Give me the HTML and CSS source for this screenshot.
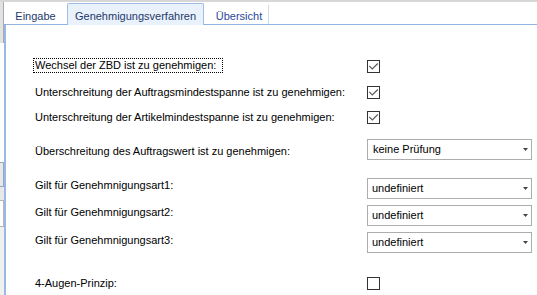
FILE: index.html
```html
<!DOCTYPE html>
<html lang="de">
<head>
<meta charset="utf-8">
<title>Genehmigungsverfahren</title>
<link rel="stylesheet" href="styles.css">
</head>
<body>
<div class="topline"></div>
<div class="window">
  <div class="side">
    <div class="side-a"></div>
    <div class="side-gap"></div>
    <div class="side-b"></div>
    <div class="side-c"></div>
    <div class="side-d"></div>
    <div class="side-e"></div>
  </div>
  <div class="tabctl">
    <div class="tabbar">
      <div class="tab tab-first">Eingabe</div>
      <div class="tab tab-active">Genehmigungsverfahren</div>
      <div class="tab tab-last">Übersicht</div>
    </div>
    <div class="page">
      <div class="row r1">
        <span class="label focus">Wechsel der ZBD ist zu genehmigen:</span>
        <span class="check"><svg class="tick" viewBox="0 0 11 11" width="11" height="11"><path d="M1.2 4.8 L4.3 7.9 L9.8 2.5" fill="none" stroke="#5a5a5a" stroke-width="1.2"/></svg></span>
      </div>
      <div class="row r2">
        <span class="label">Unterschreitung der Auftragsmindestspanne ist zu genehmigen:</span>
        <span class="check"><svg class="tick" viewBox="0 0 11 11" width="11" height="11"><path d="M1.2 4.8 L4.3 7.9 L9.8 2.5" fill="none" stroke="#5a5a5a" stroke-width="1.2"/></svg></span>
      </div>
      <div class="row r3">
        <span class="label">Unterschreitung der Artikelmindestspanne ist zu genehmigen:</span>
        <span class="check"><svg class="tick" viewBox="0 0 11 11" width="11" height="11"><path d="M1.2 4.8 L4.3 7.9 L9.8 2.5" fill="none" stroke="#5a5a5a" stroke-width="1.2"/></svg></span>
      </div>
      <div class="row r4">
        <span class="label down">Überschreitung des Auftragswert ist zu genehmigen:</span>
        <div class="select wide"><span>keine Prüfung</span><svg class="arrow" width="5" height="3" viewBox="0 0 5 3"><path d="M0 0H5L2.5 3Z" fill="#444"/></svg></div>
      </div>
      <div class="row r5">
        <span class="label lift">Gilt für Genehmnigungsart1:</span>
        <div class="select"><span>undefiniert</span><svg class="arrow" width="5" height="3" viewBox="0 0 5 3"><path d="M0 0H5L2.5 3Z" fill="#444"/></svg></div>
      </div>
      <div class="row r6">
        <span class="label lift">Gilt für Genehmnigungsart2:</span>
        <div class="select"><span>undefiniert</span><svg class="arrow" width="5" height="3" viewBox="0 0 5 3"><path d="M0 0H5L2.5 3Z" fill="#444"/></svg></div>
      </div>
      <div class="row r7">
        <span class="label lift-s">Gilt für Genehmnigungsart3:</span>
        <div class="select"><span>undefiniert</span><svg class="arrow" width="5" height="3" viewBox="0 0 5 3"><path d="M0 0H5L2.5 3Z" fill="#444"/></svg></div>
      </div>
      <div class="row r8">
        <span class="label">4-Augen-Prinzip:</span>
        <span class="check"></span>
      </div>
    </div>
  </div>
</div>
</body>
</html>
```

FILE: styles.css
```css
html, body {
  margin: 0;
  padding: 0;
  height: 295px;
  overflow: hidden;
  background: #ffffff;
  font-family: "Liberation Sans", Arial, sans-serif;
}

.topline {
  height: 2px;
  background: #d7d7d7;
}

.window {
  display: flex;
  height: 293px;
}

/* partially visible panel on the left */
.side {
  width: 4px;
  display: flex;
  flex-direction: column;
}
.side-a {
  height: 41px;
  background: #e2e2e2;
  border-right: 1px solid #a9a9a9;
  box-sizing: border-box;
}
.side-gap {
  height: 119px;
}
.side-b {
  height: 25px;
  box-sizing: border-box;
  background: #e8e8e8;
  border-top: 1px solid #8ea8c8;
  border-bottom: 1px solid #8ea8c8;
  border-right: 1px solid #8ea8c8;
}
.side-c {
  height: 13px;
  background: #e8e8e8;
}
.side-d {
  height: 27px;
  box-sizing: border-box;
  background: #ffffff;
  border-top: 1px solid #b5b5b5;
  border-bottom: 1px solid #b5b5b5;
  border-right: 1px solid #b5b5b5;
}
.side-e {
  flex: 1;
  background: #f0f0f0;
}

/* tab control */
.tabctl {
  flex: 1;
  display: flex;
  flex-direction: column;
}
.tabbar {
  height: 22px;
  display: flex;
  align-items: flex-end;
  border-bottom: 1px solid #8fb3e2;
}
.tab {
  box-sizing: border-box;
  font-size: 11px;
  line-height: 13px;
  color: #1e3a6b;
  text-align: center;
  white-space: nowrap;
  padding-top: 5px;
  padding-bottom: 1px;
}
.tab-first {
  width: 63px;
}
.tab-active {
  width: 137px;
  padding-top: 6px;
  padding-bottom: 2px;
  margin-bottom: -1px;
  background: #e9f1fb;
  border: 1px solid #9fbde6;
  border-bottom: none;
  border-radius: 2px 2px 0 0;
}
.tab-last {
  width: 65px;
  padding-left: 6px;
  color: #2748a0;
  border-right: 1px solid #cddcef;
}

.page {
  flex: 1;
  border-left: 2px solid #9bb8e0;
  padding: 31px 0 0 29px;
}

.row {
  display: grid;
  grid-template-columns: 332px 165px;
  align-items: center;
  height: 21px;
}
.r2 { margin-top: 5px; }
.r3 { margin-top: 4px; }
.r4 { margin-top: 11px; }
.r5 { margin-top: 18px; }
.r6 { margin-top: 6px; }
.r7 { margin-top: 6px; }
.r8 { margin-top: 20px; }

.label {
  font-size: 11px;
  line-height: 13px;
  color: #000000;
  white-space: nowrap;
}
.focus {
  justify-self: start;
  margin-left: -2px;
  margin-bottom: 2px;
  padding: 0 6px 0 1px;
  border: 1px dotted #000000;
}
.down { margin-top: 3px; }
.lift { margin-bottom: 7px; }
.lift-s { margin-bottom: 5px; }

.check {
  width: 13px;
  height: 13px;
  box-sizing: border-box;
  border: 1px solid #333333;
  background: #ffffff;
  display: flex;
}
.tick {
  display: block;
}

.select {
  box-sizing: border-box;
  height: 21px;
  width: 165px;
  border: 1px solid #adadad;
  background: #ffffff;
  display: flex;
  align-items: center;
  justify-content: space-between;
  padding: 0 3px 0 4px;
  font-size: 11px;
  line-height: 13px;
  color: #000000;
}
.select.wide {
  padding-left: 5px;
}
.arrow {
  display: block;
}
```
